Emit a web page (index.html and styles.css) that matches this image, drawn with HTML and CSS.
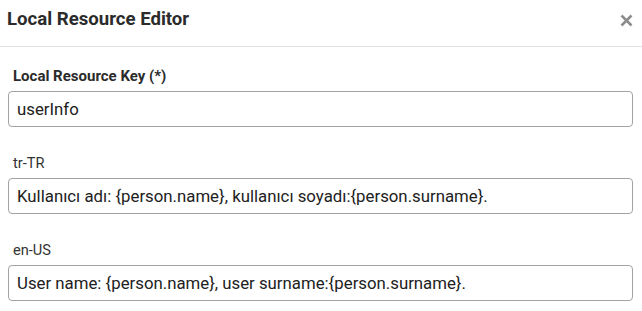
FILE: index.html
```
<!DOCTYPE html>
<html>
<head>
<meta charset="utf-8">
<link rel="stylesheet" href="styles.css">
</head>
<body>
<div class="dialog">
  <div class="header">
    <div class="title">Local Resource Editor</div>
    <button class="close" aria-label="Close">
      <svg width="13" height="13" viewBox="0 0 13 13"><path d="M1.5 1.5 L11.5 11.5 M11.5 1.5 L1.5 11.5" stroke="#8c8c8c" stroke-width="2.5" stroke-linecap="butt" fill="none"/></svg>
    </button>
  </div>
  <div class="body">
    <div class="field">
      <label class="label label-bold">Local Resource Key (*)</label>
      <input class="input" type="text" value="userInfo">
    </div>
    <div class="field">
      <label class="label">tr-TR</label>
      <input class="input" type="text" value="Kullanıcı adı: {person.name}, kullanıcı soyadı:{person.surname}.">
    </div>
    <div class="field">
      <label class="label">en-US</label>
      <input class="input" type="text" value="User name: {person.name}, user surname:{person.surname}.">
    </div>
  </div>
</div>
</body>
</html>
```
FILE: styles.css
```
* { box-sizing: border-box; }
html, body { margin: 0; padding: 0; background: #fff; }
body { font-family: Roboto, "Liberation Sans", sans-serif; color: #212121; }
.dialog { width: 642px; }
.header {
  display: flex;
  align-items: flex-start;
  justify-content: space-between;
  height: 47px;
  padding: 7px 9px 0 7px;
  border-bottom: 1px solid #e3e3e3;
}
.title {
  font-size: 18.6px;
  line-height: 24px;
  font-weight: 700;
  color: #2b2b2b;
}
.close {
  margin-top: 7px;
  padding: 0;
  border: 0;
  background: none;
  width: 13px;
  height: 13px;
  display: block;
}
.close svg { display: block; }
.body {
  display: flex;
  flex-direction: column;
  gap: 26px;
  padding: 19px 9px 0 8px;
}
.field { display: flex; flex-direction: column; gap: 5px; }
.label {
  font-size: 14.6px;
  line-height: 20px;
  padding-left: 5px;
  color: #333;
}
.label-bold { font-size: 15px; font-weight: 700; color: #2b2b2b; }
.input {
  height: 36px;
  width: 100%;
  border: 1px solid #a3a3a3;
  border-radius: 4px;
  padding: 0 8px;
  font-family: Roboto, "Liberation Sans", sans-serif;
  font-size: 16.8px;
  color: #212121;
  background: #fff;
  outline: none;
}
```
